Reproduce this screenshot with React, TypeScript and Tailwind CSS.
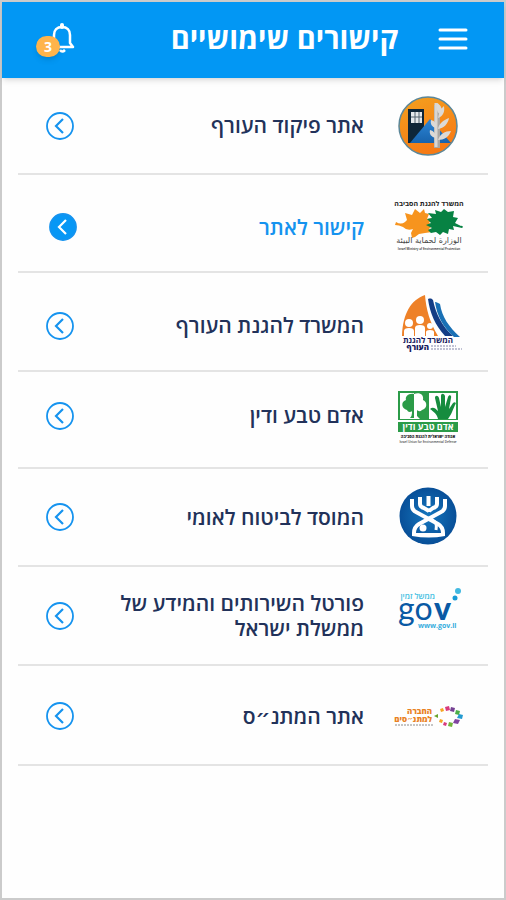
import type { ReactNode } from 'react';

interface LinkItem {
  label: string;
  logo: ReactNode;
  layout: string;
  active?: boolean;
}

const SVG_FONT = '"Open Sans", "DejaVu Sans", sans-serif';

function HomeFrontLogo() {
  return (
    <svg viewBox="0 0 70 60" className="h-[60px] w-[70px]" aria-hidden="true">
      <defs>
        <linearGradient id="homeFrontSun" x1="0" y1="0" x2="0.4" y2="1">
          <stop offset="0" stopColor="#f3a11f" />
          <stop offset="1" stopColor="#f77a14" />
        </linearGradient>
        <linearGradient id="homeFrontHill" x1="0" y1="0" x2="0" y2="1">
          <stop offset="0" stopColor="#2c86d8" />
          <stop offset="1" stopColor="#1863ac" />
        </linearGradient>
      </defs>
      <circle cx="34" cy="30" r="29" fill="url(#homeFrontSun)" stroke="#5b8799" strokeWidth="1.5" />
      <path d="M14 13h16v20L17 47h-3z" fill="#0e2638" />
      <path d="M16 47 36 23l21 24z" fill="url(#homeFrontHill)" />
      <path d="M17 16h11v11H17z" fill="#e4e9ec" />
      <path d="M21 16v11M25 16v11M17 21h11" stroke="#53636f" strokeWidth="1" />
      <path d="M43 9v43" stroke="#a9a6a2" strokeWidth="6" />
      <path d="M42 7v44" stroke="#d9d6d2" strokeWidth="3" />
      <path d="M43 7c4 2 6 6 4 12-4-2-5-7-4-12zM44 22c1-6 3-10 6-12 1 6-1 10-6 12zM44 33c1-6 6-9 11-11-1 6-5 10-11 11zM44 44c2-6 7-9 13-9-2 6-7 9-13 9zM42 32c-4-1-6-4-5-8 4 1 6 4 5 8zM42 42c-5-1-7-4-6-8 4 1 6 4 6 8z" fill="#dcd9d5" />
    </svg>
  );
}

function EnvironmentLogo() {
  return (
    <svg viewBox="0 0 70 54" className="h-[54px] w-[70px]" aria-hidden="true" direction="rtl" fontFamily={SVG_FONT}>
      <text x="35" y="6" textAnchor="middle" fontSize="7" fontWeight="700" fill="#222">המשרד להגנת הסביבה</text>
      <path d="M2 22q5 3 9 0l2-2-2-7 7 2 3-6 5 4 4-4 1 4 4 1-2 5 6-1-4 5 4 2-4 4 3 3-7 1-6 1-4 3-3 1-1-5 2-4q-6 2-10-2-4-2-8-2z" fill="#f7941e" />
      <path d="m34 13 8 1-1-4 6 2 3-3 4 3 6-1-1 6 5 1-3 5 6 3q1-1 2 1l-1 1-9-2 1 4-5-1-1 5-5-2-3 3-4-3-5 1-3-3 4-2-6-3 5-2-4-4 5-1z" fill="#078243" />
      <text x="35" y="43" textAnchor="middle" fontSize="8" fontFamily='"DejaVu Sans", sans-serif' fill="#444">الوزارة لحماية البيئة</text>
      <text x="35" y="50" textAnchor="middle" direction="ltr" fontSize="3" fontWeight="600" fill="#222">Israel Ministry of Environmental Protection</text>
    </svg>
  );
}

function DefenseLogo() {
  return (
    <svg viewBox="0 0 70 62" className="h-[62px] w-[70px]" aria-hidden="true" direction="rtl" fontFamily={SVG_FONT}>
      <path d="M8 41C9 18 17 5 31 0c1 14 5 28 13 41z" fill="#ee8128" />
      <g fill="#fff">
        <circle cx="15" cy="28" r="4" />
        <circle cx="26" cy="25" r="4" />
        <circle cx="36" cy="31" r="3" />
        <path d="M10 41v-5q0-3 5-3t5 3v5zM21 41v-8q0-3 5-3t5 3v8zM32 41v-4q0-2 4-2t4 2v4z" />
      </g>
      <path d="M34 4c3-1 4 0 5 1 3 14 9 26 20 36h-8C41 30 36 18 34 4z" fill="#143d85" />
      <path d="M41 7c2 0 3 1 5 2 2 13 9 23 20 33h-6C49 32 43 21 41 7z" fill="#1970b5" />
      <text x="59" y="48" fontSize="8" fontWeight="700" fill="#171b60">המשרד להגנת</text>
      <text x="35" y="55" fontSize="8" fontWeight="800" fill="#171b60">העורף</text>
      <path d="M37 51h25M37 54h31" stroke="#8386aa" strokeWidth="1" strokeDasharray="2 1" />
    </svg>
  );
}

function NatureLogo() {
  return (
    <svg viewBox="0 0 70 58" className="h-[58px] w-[70px]" aria-hidden="true" direction="rtl" fontFamily={SVG_FONT}>
      <path d="M4 4h60v41H4z" fill="#2b9b48" />
      <path d="M6 6h14v26H6zM35 6h27v26H35z" fill="#fff" />
      <path d="M20 7c-6-1-9 3-8 6-6 2-4 9 1 10 1 3 5 2 7 0z" fill="#2b9b48" />
      <path d="M18 22h2v9h-4q2-2 2-5z" fill="#2b9b48" />
      <path d="M20 7c6-2 10 1 9 6 5 2 4 9-1 10-2 2-4 1-5 0v6l3 3h-6z" fill="#fff" />
      <path d="M44 32c-1-5-4-7-8-10 3-3 6 0 8 2l-3-13c0-3 3-3 4 0l2 9 0-11c0-3 3-3 4 0l0 11 3-10c1-3 4-2 3 1l-2 11 4-6c2-2 4 0 2 2-3 7-4 10-7 14z" fill="#168c3e" />
      <path d="M4 34h60" stroke="#fff" strokeWidth="2" />
      <text x="34" y="43" textAnchor="middle" fontSize="9" fontWeight="700" fill="#fff">אדם טבע ודין</text>
      <text x="34" y="51" textAnchor="middle" fontSize="4" fontWeight="800" fill="#222">אגודה ישראלית להגנת הסביבה</text>
      <text x="34" y="56" textAnchor="middle" direction="ltr" fontSize="3" fontWeight="600" fill="#444">Israel Union for Environmental Defense</text>
    </svg>
  );
}

function InsuranceLogo() {
  return (
    <svg viewBox="0 0 70 60" className="h-[60px] w-[70px]" aria-hidden="true">
      <defs>
        <radialGradient id="insuranceDisc">
          <stop offset="0" stopColor="#1577be" />
          <stop offset="1" stopColor="#084f98" />
        </radialGradient>
      </defs>
      <circle cx="34" cy="29" r="28.500" fill="url(#insuranceDisc)" />
      <g fill="none" stroke="#fff" strokeWidth="4">
        <path d="M18 12v7q0 4 4 6l22 12q5 3 5 9" />
        <path d="M51 12v7q0 4-4 6L25 37q-5 3-5 9" />
        <path d="M26 10v7q0 3 4 4l5 3M43 10v7q0 3-4 4l-4 3M34.500 9v10" />
        <path d="m37 32 4 3q2 2 1 8" strokeWidth="3" />
      </g>
      <circle cx="29" cy="41" r="3.500" fill="#fff" />
      <path d="M18 46h33v3q-16 3-33 0z" fill="#fff" />
    </svg>
  );
}

function GovLogo() {
  return (
    <svg viewBox="0 0 70 56" className="h-14 w-[70px]" aria-hidden="true" direction="rtl" fontFamily={SVG_FONT}>
      <text x="41" y="11" fontSize="8" fontWeight="600" fill="#44bfe2">ממשל זמין</text>
      <g direction="ltr" fill="#0959a4" fontSize="32" fontFamily="Lato, sans-serif">
        <text x="4" y="32" fontWeight="400">go</text>
        <text x="40" y="32" fontWeight="900">v</text>
      </g>
      <text x="24" y="40" direction="ltr" fontSize="7" fontWeight="700" fill="#35addd">www.gov.il</text>
      <circle cx="61" cy="10" r="2.500" fill="#179bd7" />
      <circle cx="64" cy="3" r="3" fill="#42b9e1" />
    </svg>
  );
}

function CommunityLogo() {
  return (
    <svg viewBox="0 0 70 24" className="h-6 w-[70px]" aria-hidden="true" direction="rtl" fontFamily={SVG_FONT}>
      <text x="38" y="10" fontSize="8" fontWeight="800" fill="#e98224">החברה</text>
      <text x="38" y="18" fontSize="8" fontWeight="800" fill="#e98224">למתנ״סים</text>
      <path d="M1 21h38" stroke="#8c8c8c" strokeWidth="1" strokeDasharray="2 1" />
      <path d="m40 12 4-2v4z" fill="#69a42c" />
      <path d="m46 5 3-1 1 3-3 1z" fill="#f5a623" />
      <path d="m51 3 4-1 1 4-4 1z" fill="#d83a7d" />
      <path d="m57 3 4 1-1 4-4-1z" fill="#754193" />
      <path d="m62 6 4 1-1 4-4-1z" fill="#4cad48" />
      <path d="m65 10 4 1-1 4-5-1z" fill="#249bd1" />
      <path d="m61 15 5 1-2 4-5-1z" fill="#8044a0" />
      <path d="m55 18 4 1-1 4-4-1z" fill="#73b63c" />
      <path d="m50 18 3 1-1 3-3-1z" fill="#d83a7d" />
      <path d="m46 15 3 1-1 3-3-1z" fill="#f5a623" />
    </svg>
  );
}

const links: LinkItem[] = [
  { label: 'אתר פיקוד העורף', logo: <HomeFrontLogo />, layout: 'h-[95px]' },
  { label: 'קישור לאתר', logo: <EnvironmentLogo />, layout: 'h-24 pt-2', active: true },
  { label: 'המשרד להגנת העורף', logo: <DefenseLogo />, layout: 'h-[97px] pt-2' },
  { label: 'אדם טבע ודין', logo: <NatureLogo />, layout: 'h-[95px] pb-2' },
  { label: 'המוסד לביטוח לאומי', logo: <InsuranceLogo />, layout: 'h-24' },
  { label: 'פורטל השירותים והמידע של ממשלת ישראל', logo: <GovLogo />, layout: 'h-[97px]' },
  { label: 'אתר המתנ״ס', logo: <CommunityLogo />, layout: 'h-[98px] pt-0.5' },
];

function ArrowIcon({ active }: { active?: boolean }) {
  return (
    <svg viewBox="0 0 28 28" className="size-7 shrink-0" fill="none" aria-hidden="true">
      <circle cx="14" cy="14" r="13" fill={active ? '#0797f5' : 'none'} stroke="#1593ef" strokeWidth="1.800" />
      <path d="m17 7-7 7 7 7" stroke={active ? '#fff' : '#1593ef'} strokeWidth="2.200" />
    </svg>
  );
}

function Header() {
  return (
    <header className="flex h-[76px] items-center bg-[#0297f4] pr-9 pb-1 pl-11 text-white shadow-md">
      <button type="button" aria-label="תפריט">
        <svg viewBox="0 0 30 24" className="h-6 w-[30px]" stroke="currentColor" strokeWidth="3" strokeLinecap="round" aria-hidden="true">
          <path d="M2 4h26M2 13h26M2 22h26" />
        </svg>
      </button>
      <h1 className="mr-10 text-[29px] leading-9 font-bold">קישורים שימושיים</h1>
      <button type="button" aria-label="התראות" className="relative mr-auto">
        <svg viewBox="0 0 30 32" className="h-8 w-[30px]" fill="none" stroke="currentColor" strokeWidth="2.500" aria-hidden="true">
          <path d="M3 25h24l-3-4v-8c0-5-3-8-8-8s-8 3-8 8v8l-4 4" strokeLinejoin="round" />
          <path d="M16 5V3" strokeWidth="4" strokeLinecap="round" />
          <path d="M14 28q2 3 5 0" />
        </svg>
        <span className="absolute top-3.5 right-4 flex h-[21px] w-6 items-center justify-center rounded-full bg-[#ffb44b] text-sm font-bold shadow-md">3</span>
      </button>
    </header>
  );
}

export default function App() {
  return (
    <div dir="rtl" lang="he" className="min-h-screen border-2 border-[#cbcbcb] bg-[#fefefe] font-['Open_Sans','DejaVu_Sans',sans-serif]">
      <Header />
      <main className="px-4">
        <ul>
          {links.map((link) => (
            <li key={link.label} className="border-b-2 border-[#e4e4e4]">
              <a href="#" className={`flex items-center pr-6 ${link.active ? 'pl-[31px] text-[#1593ef]' : 'pl-7 text-[#22325a]'} ${link.layout}`}>
                <span className="flex w-[70px] shrink-0 justify-center">{link.logo}</span>
                <span className="mr-[30px] max-w-[260px] text-[21px] leading-[25px] font-semibold">{link.label}</span>
                <span className="mr-auto"><ArrowIcon active={link.active} /></span>
              </a>
            </li>
          ))}
        </ul>
      </main>
    </div>
  );
}
